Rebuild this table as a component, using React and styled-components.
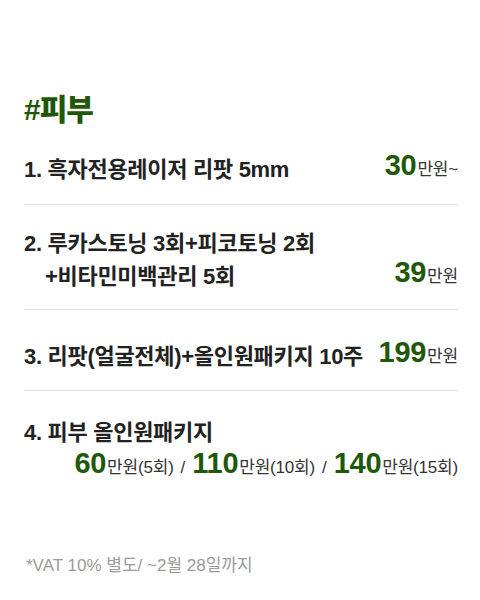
import React from 'react'
import styled, { createGlobalStyle } from 'styled-components'

const GlobalStyle = createGlobalStyle`
    body {
        margin: 0;
        background: #fff;
        font-family: "Liberation Sans", "Noto Sans CJK KR", sans-serif;
        color: #222;
    }
`

const Page = styled.div`
    padding: 90px 22px 0 24px;
`

const Title = styled.h2`
    margin: 0 0 21px;
    font-size: 30px;
    line-height: 40px;
    font-weight: 900;
    color: #1f5808;
    letter-spacing: -1px;
`

const List = styled.ol`
    list-style: none;
    margin: 0;
    padding: 0;
`

const Item = styled.li`
    padding: ${(p) => p.$pad || '22px 0 20px'};
    border-bottom: ${(p) => (p.$last ? 'none' : '1px solid #e3e3e3')};
`

const Row = styled.div`
    display: flex;
    justify-content: space-between;
    align-items: flex-end;
`

const Name = styled.div`
    font-size: 22px;
    line-height: 33px;
    font-weight: 700;
    color: #222;
    letter-spacing: -0.3px;
    white-space: nowrap;
`

const Indent = styled.span`
    display: block;
    padding-left: 21px;
`

const Prices = styled.div`
    display: flex;
    justify-content: flex-end;
    align-items: baseline;
    line-height: ${(p) => p.$lh || '33px'};
`

const Price = styled.span`
    white-space: nowrap;
    font-size: 17px;
    color: #333;
    letter-spacing: -0.2px;
`

const Num = styled.b`
    font-size: 29px;
    line-height: 1;
    font-weight: 700;
    color: #1f5808;
    letter-spacing: -0.3px;
    margin-right: 1px;
`

const Sep = styled.span`
    font-size: 17px;
    color: #333;
    margin: 0 7px;
`

const Note = styled.p`
    margin: 73px 0 0 2px;
    font-size: 17px;
    line-height: 22px;
    color: #9a9a9a;
`

const Won = ({ n, unit = '만원' }) => (
    <Price>
        <Num>{n}</Num>
        {unit}
    </Price>
)

const App = () => (
    <>
        <GlobalStyle />
        <Page>
            <Title>#피부</Title>
            <List>
                <Item $pad="0 0 18px">
                    <Row>
                        <Name>1. 흑자전용레이저 리팟 5mm</Name>
                        <Prices>
                            <Won n="30" unit="만원~" />
                        </Prices>
                    </Row>
                </Item>
                <Item $pad="22px 0 16px">
                    <Row>
                        <Name>
                            2. 루카스토닝 3회+피코토닝 2회
                            <Indent>+비타민미백관리 5회</Indent>
                        </Name>
                        <Prices>
                            <Won n="39" />
                        </Prices>
                    </Row>
                </Item>
                <Item $pad="28px 0 17px">
                    <Row>
                        <Name>3. 리팟(얼굴전체)+올인원패키지 10주</Name>
                        <Prices>
                            <Won n="199" />
                        </Prices>
                    </Row>
                </Item>
                <Item $pad="25px 0 0" $last>
                    <Name>4. 피부 올인원패키지</Name>
                    <Prices $lh="29px">
                        <Won n="60" unit="만원(5회)" />
                        <Sep>/</Sep>
                        <Won n="110" unit="만원(10회)" />
                        <Sep>/</Sep>
                        <Won n="140" unit="만원(15회)" />
                    </Prices>
                </Item>
            </List>
            <Note>*VAT 10% 별도/ ~2월 28일까지</Note>
        </Page>
    </>
)

export default App
